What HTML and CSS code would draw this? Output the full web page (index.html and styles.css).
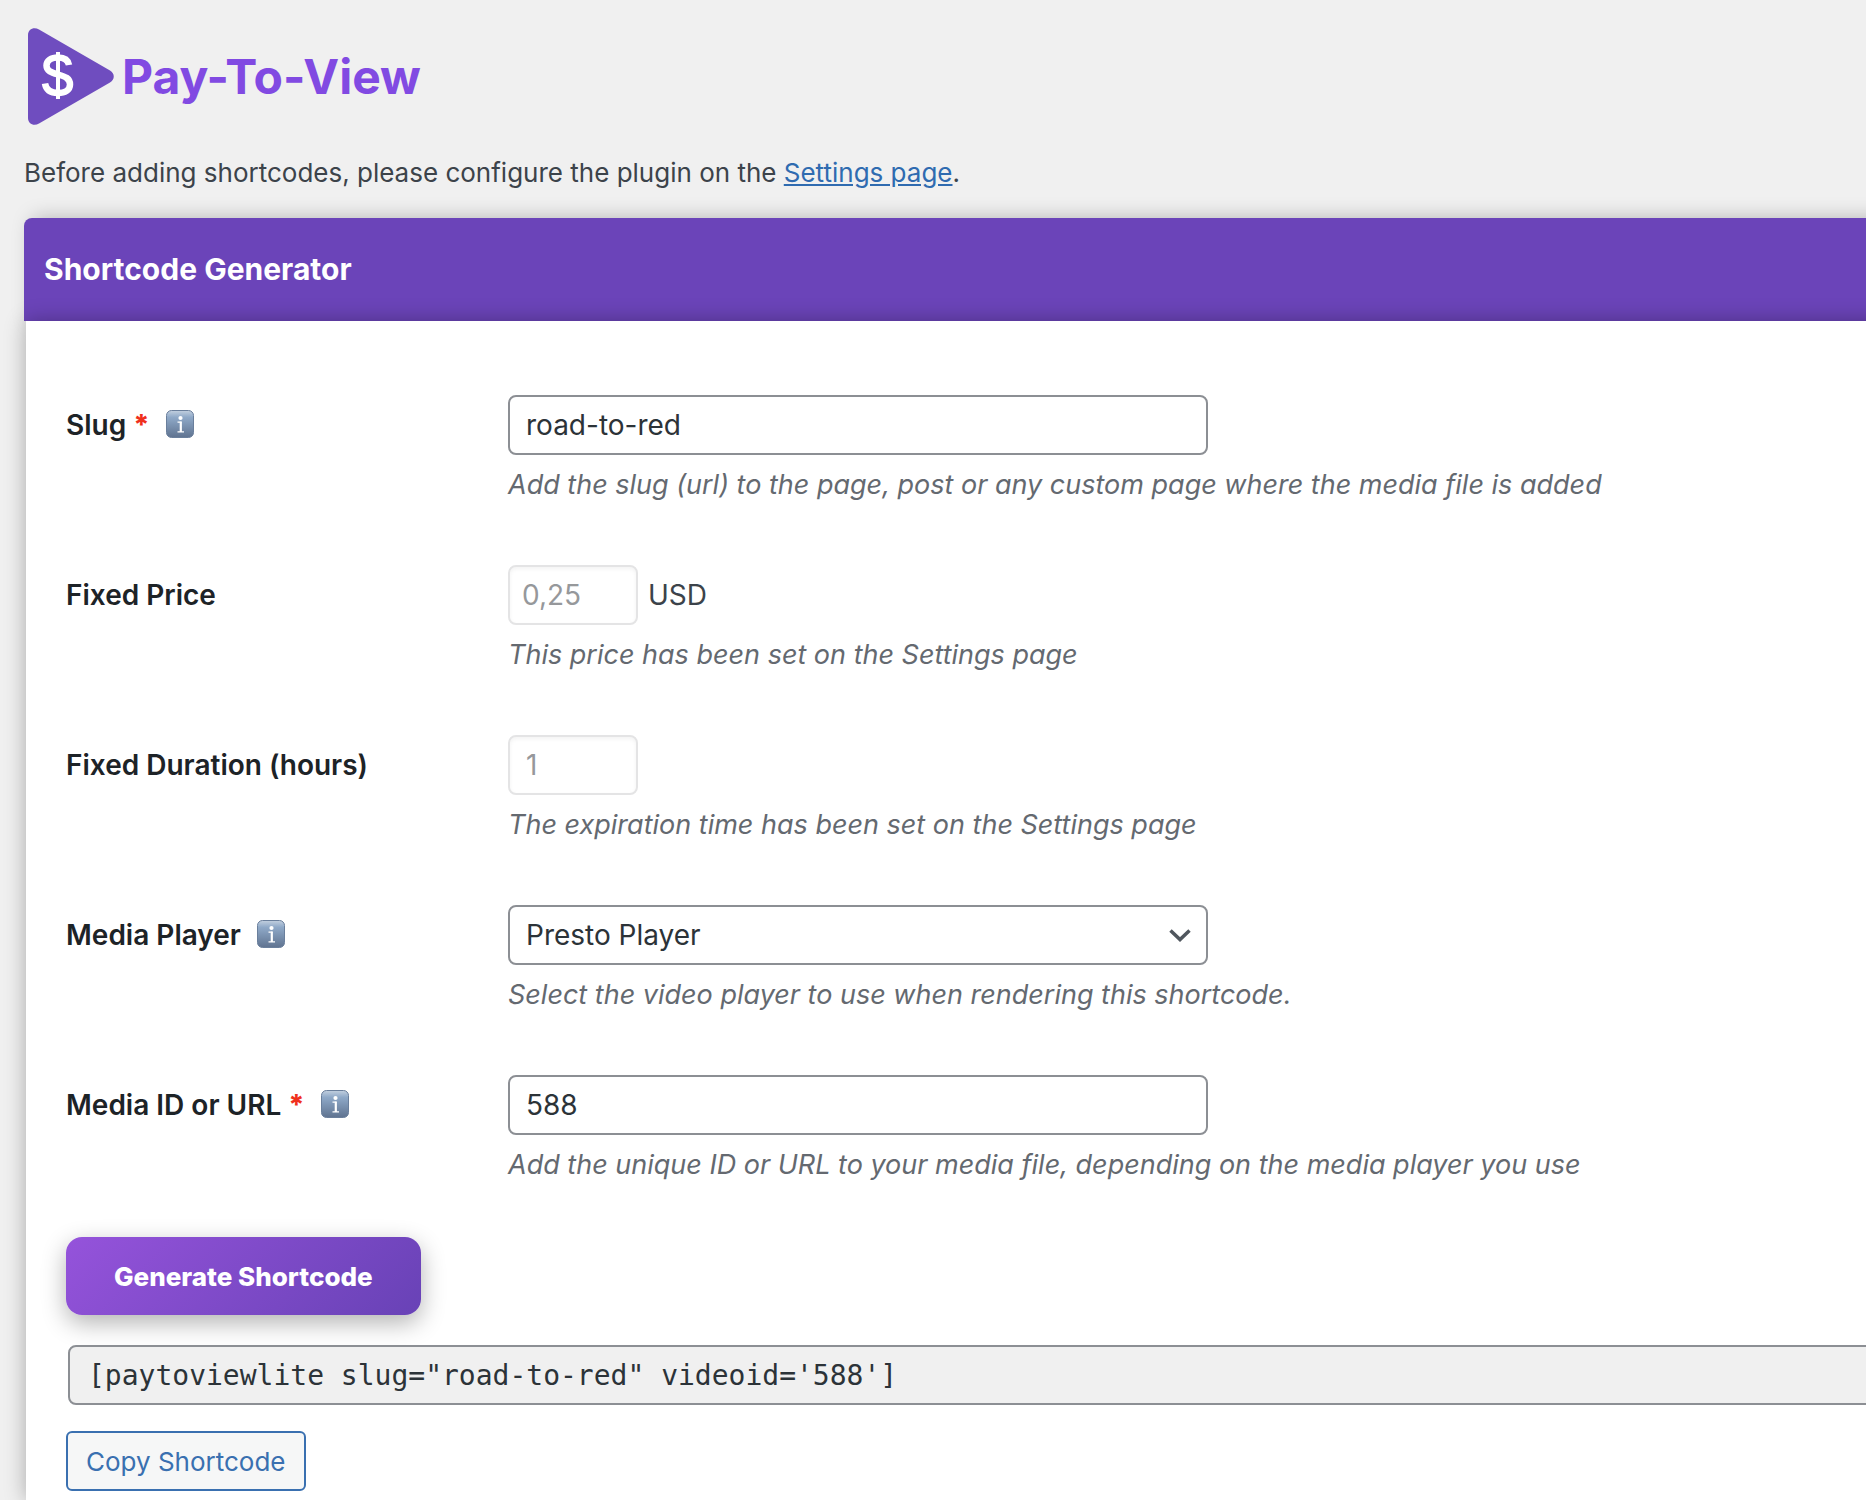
FILE: index.html
```html
<!DOCTYPE html>
<html lang="en">
<head>
    <meta charset="UTF-8">
    <meta name="viewport" content="width=device-width, initial-scale=1.0">
    <title>Pay-To-View</title>
    <link rel="stylesheet" href="styles.css">
</head>
<body>
    <svg class="sprite" width="0" height="0" aria-hidden="true">
        <defs>
            <linearGradient id="infoFill" x1="0" y1="0" x2="0" y2="1">
                <stop offset="0" stop-color="#c3d0df"/>
                <stop offset="0.25" stop-color="#8fa9c8"/>
                <stop offset="1" stop-color="#5f7390"/>
            </linearGradient>
            <symbol id="info" viewBox="0 0 28 28">
                <rect x="0.5" y="0.5" width="27" height="27" rx="5" fill="url(#infoFill)" stroke="#6a7f9c"/>
                <circle cx="14.5" cy="8" r="2.1" fill="#fff"/>
                <path d="M11.5 12.2h4M11.5 21.8h6.5" fill="none" stroke="#fff" stroke-width="1.2"/>
                <path d="M14.8 11.6v10.4" fill="none" stroke="#fff" stroke-width="2.2"/>
            </symbol>
        </defs>
    </svg>

    <div class="wrap">
        <header class="logo">
            <svg class="logo-icon" width="86" height="98" viewBox="0 0 86 98" aria-hidden="true">
                <path d="M0 7C0 1 6 -1.500 11 1.500L82 42.500C87 45.500 87 51.500 82 54.500L11 95.500C6 98.500 0 96 0 90Z" fill="#6f4dbf"/>
                <path d="M41 37C40 31.500 35.500 29.500 30 29.500C23 29.500 18.500 32.500 18.500 37.500C18.500 43 23 44.500 30 46.500C37.500 48.500 42 50.500 42 56.500C42 62 37 65 30 65C22.500 65 18 61.500 17 55.500" fill="none" stroke="#fff" stroke-width="6.500"/>
                <path d="M30 24v47" stroke="#fff" stroke-width="4"/>
            </svg>
            <h1 class="logo-text">Pay-To-View</h1>
        </header>

        <p class="intro">Before adding shortcodes, please configure the plugin on the <a href="#settings">Settings page</a>.</p>

        <section class="card">
            <h2 class="card-title">Shortcode Generator</h2>

            <form class="card-body">
                <div class="field">
                    <div class="field-label">
                        <label for="slug">Slug <span class="required">*</span></label>
                        <svg class="info"><use href="#info"/></svg>
                    </div>
                    <div>
                        <input type="text" id="slug" name="slug" value="road-to-red">
                        <p class="description">Add the slug (url) to the page, post or any custom page where the media file is added</p>
                    </div>
                </div>

                <div class="field">
                    <div class="field-label">
                        <label for="price">Fixed Price</label>
                    </div>
                    <div>
                        <div class="inline">
                            <input type="text" id="price" class="small price" name="price" value="0,25" disabled>
                            <span>USD</span>
                        </div>
                        <p class="description">This price has been set on the Settings page</p>
                    </div>
                </div>

                <div class="field">
                    <div class="field-label">
                        <label for="duration">Fixed Duration (hours)</label>
                    </div>
                    <div>
                        <input type="text" id="duration" class="small" name="duration" value="1" disabled>
                        <p class="description">The expiration time has been set on the Settings page</p>
                    </div>
                </div>

                <div class="field">
                    <div class="field-label">
                        <label for="player">Media Player</label>
                        <svg class="info"><use href="#info"/></svg>
                    </div>
                    <div>
                        <div class="select-box">
                            <select id="player" name="player">
                                <option>Presto Player</option>
                            </select>
                            <svg class="chevron" width="22" height="13" viewBox="0 0 22 13" aria-hidden="true">
                                <path d="M1.500 1.500L11 10.500L20.500 1.500" fill="none" stroke="#50575e" stroke-width="3.500"/>
                            </svg>
                        </div>
                        <p class="description">Select the video player to use when rendering this shortcode.</p>
                    </div>
                </div>

                <div class="field">
                    <div class="field-label">
                        <label for="media">Media ID or URL <span class="required">*</span></label>
                        <svg class="info"><use href="#info"/></svg>
                    </div>
                    <div>
                        <input type="text" id="media" name="media" value="588">
                        <p class="description">Add the unique ID or URL to your media file, depending on the media player you use</p>
                    </div>
                </div>

                <button type="button" class="generate">Generate Shortcode</button>
                <input type="text" class="output" aria-label="Shortcode" value="[paytoviewlite slug=&quot;road-to-red&quot; videoid='588']" readonly>
                <button type="button" class="copy">Copy Shortcode</button>
            </form>
        </section>
    </div>
</body>
</html>
```
FILE: styles.css
```css
* {
    box-sizing: border-box;
}
html {
    overflow-x: hidden;
}
body {
    margin: 0;
    background-color: #f0f0f0;
    color: #3c434a;
    font-family: Inter, "Liberation Sans", sans-serif;
    font-size: 28px;
    overflow-x: hidden;
}
.sprite {
    position: absolute;
}
.wrap {
    padding: 28px 0 0 24px;
    margin-right: -24px;
}
.logo {
    display: flex;
    align-items: center;
    gap: 8px;
    padding-left: 4px;
}
.logo-text {
    margin: 0;
    color: #814ae2;
    font-size: 48px;
    font-weight: 700;
    line-height: 60px;
}
.intro {
    margin: 29px 0 27px;
    font-size: 26px;
    line-height: 36px;
}
.intro a {
    color: #2f6bb0;
}
.card-title {
    margin: 0;
    padding: 31px 20px 32px;
    background-color: #6b44b9;
    border-radius: 8px 8px 0 0;
    box-shadow: 8px 0 20px rgba(0, 0, 0, 0.25);
    color: #fff;
    font-size: 30px;
    font-weight: 700;
    line-height: 40px;
}
.card-body {
    position: relative;
    margin-left: 2px;
    padding: 74px 0 9px 40px;
    background-color: #fff;
    box-shadow: 0 0 20px rgba(0, 0, 0, 0.3);
}
.field {
    display: grid;
    grid-template-columns: 442px 1fr;
    padding-bottom: 58px;
}
.field-label {
    display: flex;
    align-items: flex-start;
    gap: 16px;
}
.field label {
    color: #1d2327;
    font-weight: 600;
    line-height: 60px;
}
.required {
    color: #f0301c;
    font-weight: 800;
}
.info {
    width: 28px;
    height: 28px;
    margin-top: 15px;
}
.inline {
    display: flex;
    align-items: center;
    gap: 10px;
}
input, select {
    display: block;
    width: 700px;
    height: 60px;
    margin: 0;
    padding: 0 16px;
    border: 2px solid #8c8f94;
    border-radius: 8px;
    background-color: #fff;
    color: #2c3338;
    font-family: inherit;
    font-size: 28px;
}
select {
    appearance: none;
}
.small {
    width: 130px;
}
.price {
    padding: 0 12px;
}
input:disabled {
    border-color: #e4e4e5;
    box-shadow: inset 0 2px 4px rgba(0, 0, 0, 0.05);
    color: #96989b;
}
.select-box {
    position: relative;
    width: 700px;
}
.chevron {
    position: absolute;
    top: 24px;
    right: 17px;
    pointer-events: none;
}
.description {
    margin: 8px 0 0;
    color: #646970;
    font-size: 27px;
    font-style: italic;
    line-height: 44px;
}
button {
    display: block;
    font-family: inherit;
    font-size: 26px;
    cursor: pointer;
}
.generate {
    height: 78px;
    margin-top: -8px;
    padding: 0 48px;
    border: 0;
    border-radius: 16px;
    background: linear-gradient(135deg, #9553db, #6842b6);
    box-shadow: 0 8px 24px rgba(0, 0, 0, 0.3);
    color: #fff;
    font-weight: 800;
}
.output {
    width: 100%;
    margin: 30px 0 26px 2px;
    padding: 0 18px;
    background-color: #f0f0f0;
    font-family: "DejaVu Sans Mono", monospace;
}
.copy {
    height: 60px;
    padding: 0 18px;
    border: 2px solid #3a70b0;
    border-radius: 6px;
    background-color: #f6f7f7;
    color: #3a70b0;
}
```
